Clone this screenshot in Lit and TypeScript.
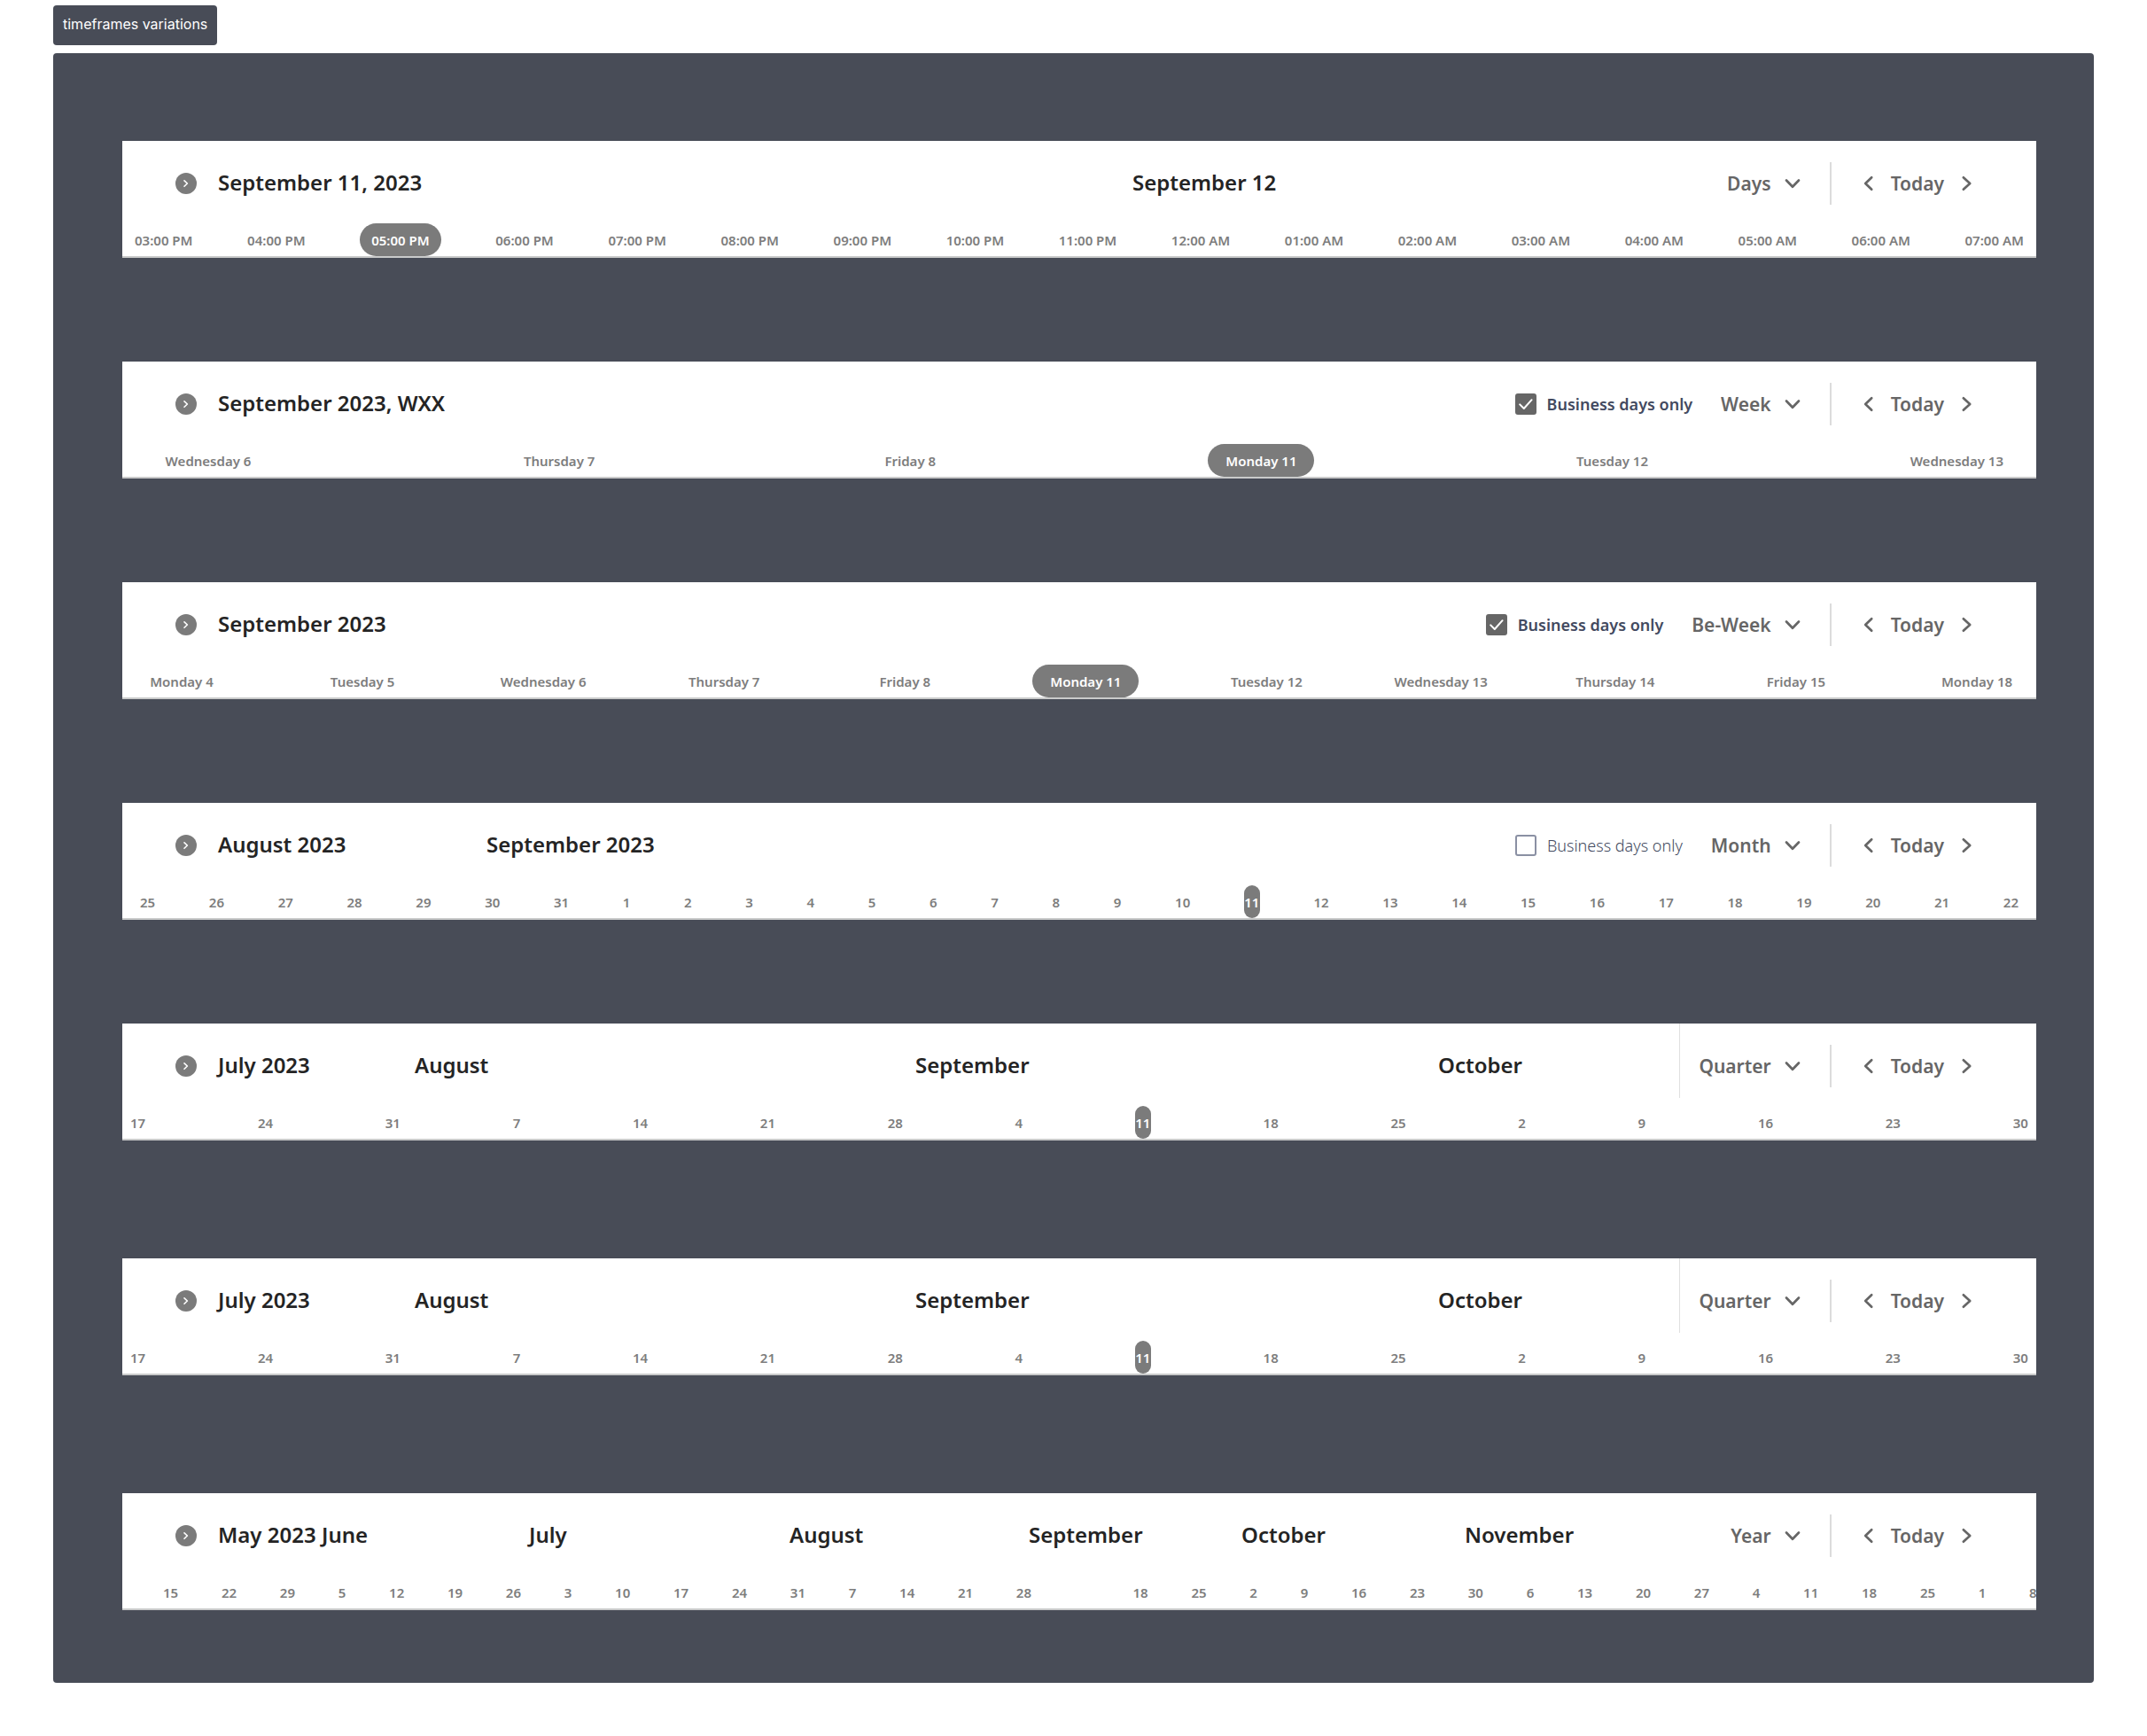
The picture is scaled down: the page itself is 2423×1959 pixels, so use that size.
import { LitElement, html, css, nothing } from "lit";
import { customElement, property } from "lit/decorators.js";
import { classMap } from "lit/directives/class-map.js";
import { styleMap } from "lit/directives/style-map.js";

interface Heading {
  text: string;
  span: number;
}

interface Timeframe {
  view: string;
  mode: string;
  headings: Heading[];
  ticks: string[];
  current: number;
  businessDays?: boolean;
}

const MODES = ["Days", "Week", "Be-Week", "Month", "Quarter", "Year"];

const h = (text: string, span: number): Heading => ({ text, span });
const list = (text: string) => text.split(" ");

const quarter: Timeframe = {
  view: "quarter",
  mode: "Quarter",
  headings: [h("July 2023", 222), h("August", 565), h("September", 590), h("October", 675)],
  ticks: list("17 24 31 7 14 21 28 4 11 18 25 2 9 16 23 30"),
  current: 8,
};

const TIMEFRAMES: Timeframe[] = [
  {
    view: "days",
    mode: "Days",
    headings: [h("September 11, 2023", 1032), h("September 12", 1020)],
    ticks: [
      "03:00 PM", "04:00 PM", "05:00 PM", "06:00 PM", "07:00 PM", "08:00 PM",
      "09:00 PM", "10:00 PM", "11:00 PM", "12:00 AM", "01:00 AM", "02:00 AM",
      "03:00 AM", "04:00 AM", "05:00 AM", "06:00 AM", "07:00 AM",
    ],
    current: 2,
  },
  {
    view: "week",
    mode: "Week",
    headings: [h("September 2023, WXX", 2052)],
    ticks: ["Wednesday 6", "Thursday 7", "Friday 8", "Monday 11", "Tuesday 12", "Wednesday 13"],
    current: 3,
    businessDays: true,
  },
  {
    view: "be-week",
    mode: "Be-Week",
    headings: [h("September 2023", 2052)],
    ticks: [
      "Monday 4", "Tuesday 5", "Wednesday 6", "Thursday 7", "Friday 8", "Monday 11",
      "Tuesday 12", "Wednesday 13", "Thursday 14", "Friday 15", "Monday 18",
    ],
    current: 5,
    businessDays: true,
  },
  {
    view: "month",
    mode: "Month",
    headings: [h("August 2023", 303), h("September 2023", 1749)],
    ticks: list("25 26 27 28 29 30 31 1 2 3 4 5 6 7 8 9 10 11 12 13 14 15 16 17 18 19 20 21 22"),
    current: 17,
    businessDays: false,
  },
  quarter,
  quarter,
  {
    view: "year",
    mode: "Year",
    headings: [
      h("May 2023", 117), h("June", 234), h("July", 294), h("August", 270),
      h("September", 240), h("October", 252), h("November", 645),
    ],
    ticks: [
      ...list("15 22 29 5 12 19 26 3 10 17 24 31 7 14 21 28"),
      "",
      ...list("18 25 2 9 16 23 30 6 13 20 27 4 11 18 25 1 8"),
    ],
    current: -1,
  },
];

const icon = (path: string, cls = "icon") => html`
  <svg class=${cls} viewBox="0 0 24 24" aria-hidden="true"><path d=${path} /></svg>
`;

@customElement("timeframe-bar")
export class TimeframeBar extends LitElement {
  @property({ attribute: false }) frame!: Timeframe;

  static styles = css`
    :host {
      display: block;
      background: #fff;
      border-bottom: 2px solid #c9caca;
      overflow: hidden;
    }
    .head {
      display: grid;
      padding-bottom: 9px;
    }
    .headings,
    .controls {
      grid-area: 1 / 1;
      display: flex;
      align-items: center;
      padding-top: 24px;
      padding-bottom: 12px;
      min-height: 48px;
    }
    .headings {
      gap: 24px;
      padding-left: 60px;
    }
    .months {
      display: flex;
      flex: 1;
      min-width: 0;
    }
    .month {
      flex: 1 1 0;
      min-width: 0;
      margin: 0;
      padding-bottom: 2px;
      font-size: 24px;
      font-weight: 600;
      line-height: 30px;
      white-space: nowrap;
      color: #242424;
    }
    button {
      display: flex;
      align-items: center;
      margin: 0;
      padding: 0;
      border: 0;
      background: none;
      font: inherit;
      color: inherit;
      cursor: pointer;
    }
    .expand {
      border-radius: 50%;
      background: #7b7b7b;
      color: #fff;
    }
    svg {
      display: block;
      width: 24px;
      height: 24px;
      fill: none;
      stroke: currentColor;
      stroke-width: 2.7;
      stroke-linecap: round;
      stroke-linejoin: round;
    }
    .small {
      stroke-width: 1.6;
    }
    .controls {
      justify-self: end;
      padding-right: 66px;
      font-size: 21px;
      font-weight: 600;
      line-height: 32px;
      color: #666;
    }
    .quarter .controls {
      padding-left: 21px;
      border-left: 1px solid #e0e0e0;
      background: #fff;
    }
    .business {
      display: flex;
      align-items: center;
      gap: 12px;
      margin-right: 32px;
      font-size: 18px;
      font-weight: 300;
      line-height: 24px;
      color: #434a60;
      cursor: pointer;
    }
    .business.on {
      font-weight: 600;
    }
    .box {
      display: grid;
      color: #fff;
    }
    .box > * {
      grid-area: 1 / 1;
    }
    .box svg {
      stroke-width: 2;
      pointer-events: none;
    }
    input {
      appearance: none;
      box-sizing: border-box;
      width: 24px;
      height: 24px;
      margin: 0;
      border: 2px solid #8a90a3;
      border-radius: 3px;
      background: #fff;
    }
    input:checked {
      border-color: #666;
      background: #666;
    }
    .mode {
      display: flex;
      align-items: center;
    }
    .mode svg {
      margin-left: -24px;
      pointer-events: none;
    }
    select {
      appearance: none;
      field-sizing: content;
      margin: 0;
      padding: 0 36px 0 0;
      border: 0;
      background: none;
      font: inherit;
      color: inherit;
      cursor: pointer;
    }
    .stepper {
      display: flex;
      align-items: center;
      gap: 14px;
      height: 48px;
      margin-left: 30px;
      padding-left: 29px;
      border-left: 2px solid #dcdcdc;
    }
    .ticks {
      display: flex;
      justify-content: space-between;
      margin: 0;
      padding: 0;
      list-style: none;
      font-size: 15px;
      font-weight: 600;
      line-height: 35px;
      color: #7d7d7d;
    }
    .tick {
      flex: none;
      padding-top: 2px;
      text-align: center;
      white-space: nowrap;
    }
    .tick.current {
      min-width: 18px;
      border-radius: 19px;
      background: #7b7b7b;
      color: #fff;
    }
    .tick.blank {
      width: 17px;
    }
    .days .ticks {
      padding: 0 14px;
    }
    .days .current {
      padding-right: 13px;
      padding-left: 13px;
    }
    .week .ticks {
      padding: 0 37px;
    }
    .be-week .ticks {
      padding: 0 7px;
    }
    .week .tick:not(.fit),
    .be-week .tick:not(.fit) {
      width: 120px;
    }
    .month-view .ticks {
      padding: 0 20px;
    }
    .quarter .ticks {
      padding: 0 9px;
    }
    .year .ticks {
      margin-right: -1px;
      padding-left: 46px;
    }
  `;

  render() {
    const f = this.frame;
    const view = f.view === "month" ? "month-view" : f.view;
    return html`
      <div class=${view}>
        <div class="head">
          <div class="headings">
            <button class="expand" type="button" aria-label="Expand">
              ${icon("M10 8.8 13.4 12 10 15.3", "small")}
            </button>
            <div class="months">
              ${f.headings.map(
                (m) => html`<h2 class="month" style=${styleMap({ flexGrow: String(m.span) })}>${m.text}</h2>`,
              )}
            </div>
          </div>
          <div class="controls">
            ${f.businessDays === undefined
              ? nothing
              : html`
                  <label class=${classMap({ business: true, on: f.businessDays })}>
                    <span class="box">
                      <input type="checkbox" .checked=${f.businessDays} />
                      ${f.businessDays ? icon("M5.2 12.4 9.8 17 18.6 7.2") : nothing}
                    </span>
                    Business days only
                  </label>
                `}
            <div class="mode">
              <select aria-label="Timeframe">
                ${MODES.map((m) => html`<option ?selected=${m === f.mode}>${m}</option>`)}
              </select>
              ${icon("M5 8.5 12 15.8 19 8.5")}
            </div>
            <div class="stepper">
              <button type="button" aria-label="Previous">${icon("M16.2 5.3 9.2 12 16.2 18.7")}</button>
              <button type="button">Today</button>
              <button type="button" aria-label="Next">${icon("M7.8 5.3 15.2 12 7.8 18.7")}</button>
            </div>
          </div>
        </div>
        <ol class="ticks">
          ${f.ticks.map(
            (t, i) => html`<li
              class=${classMap({
                tick: true,
                current: i === f.current,
                blank: t === "",
                fit: t === "Wednesday 13",
              })}
            >${t}</li>`,
          )}
        </ol>
      </div>
    `;
  }
}

@customElement("app-root")
export class AppRoot extends LitElement {
  static styles = css`
    :host {
      display: block;
      padding: 6px 60px 60px;
      background: #fff;
      font-family: "Noto Sans", "Open Sans", sans-serif;
    }
    .tag {
      box-sizing: border-box;
      width: fit-content;
      margin: 0 0 9px;
      padding: 9px 11px 12px;
      border-radius: 4px;
      background: #484c57;
      font-family: "Noto Sans", Inter, sans-serif;
      font-family: Inter, sans-serif;
      font-size: 16px;
      font-weight: 400;
      line-height: 24px;
      color: #fff;
    }
    .board {
      display: flex;
      flex-direction: column;
      gap: 117px;
      padding: 99px 65px 82px 78px;
      border-radius: 4px;
      background: #484c57;
    }
    .spaced {
      margin-top: 16px;
    }
  `;

  render() {
    return html`
      <h1 class="tag">timeframes variations</h1>
      <main class="board">
        ${TIMEFRAMES.map(
          (f, i) => html`<timeframe-bar class=${classMap({ spaced: i > 4 })} .frame=${f}></timeframe-bar>`,
        )}
      </main>
    `;
  }
}
